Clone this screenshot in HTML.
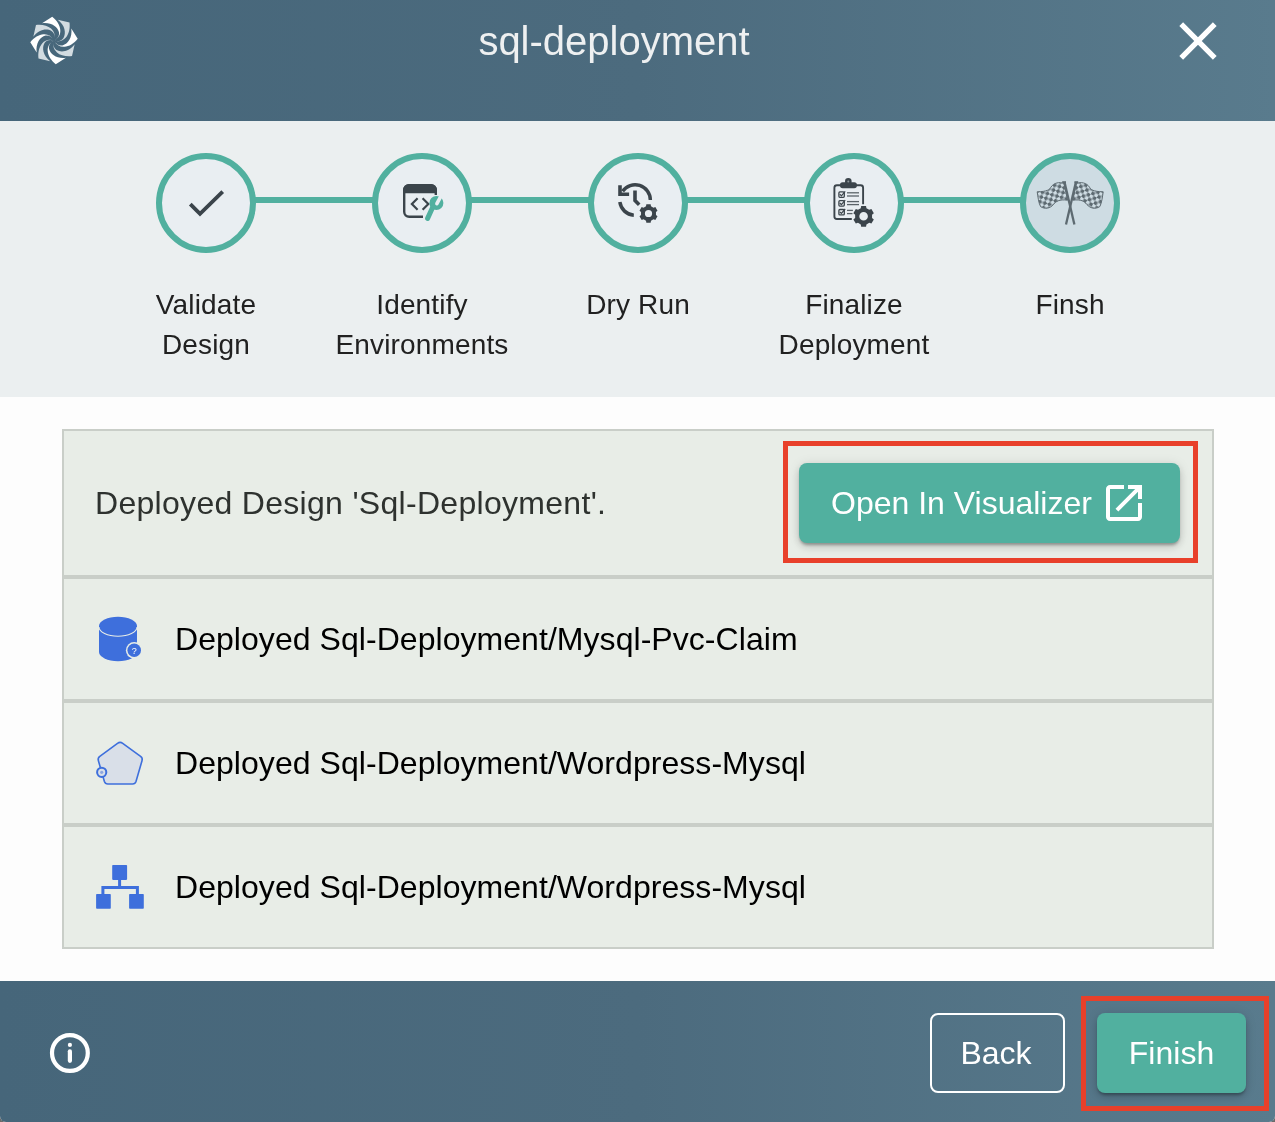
<!DOCTYPE html>
<html><head><meta charset="utf-8">
<style>
*{margin:0;padding:0;box-sizing:border-box}
html,body{width:1275px;height:1122px;overflow:hidden;background:#6b6b6b;font-family:"Liberation Sans",sans-serif}
.dlg{position:absolute;left:0;top:0;width:1275px;height:1122px;border-radius:0 0 6px 6px;overflow:hidden;background:#fdfdfd}
.hdr{position:absolute;left:0;top:0;width:1275px;height:121px;background:linear-gradient(90deg,#46667a 0%,#4c6b7e 50%,#597b8d 100%)}
.title{position:absolute;left:414px;width:400px;top:21px;height:40px;line-height:40px;font-size:40px;color:#eef0f1;text-align:center;white-space:nowrap}
.stepper{position:absolute;left:0;top:121px;width:1275px;height:276px;background:#ebeff0}
.line{position:absolute;top:76px;height:6px;background:#51b09f}
.circ{position:absolute;top:32px;width:100px;height:100px;border-radius:50%;border:6px solid #51b09f;background:#e9eef2}
.circ svg{position:absolute;left:0;top:0}
.lbl{position:absolute;top:164px;width:220px;text-align:center;font-size:28px;line-height:40px;color:#212121;letter-spacing:0.15px}
.card{position:absolute;left:62px;top:429px;width:1152px;height:520px;border:2px solid #c9cec8;background:#c9cec8}
.row{position:absolute;left:0;width:1148px;background:#e8ede7}
.rtxt{position:absolute;left:111px;font-size:32px;line-height:40px;color:#000;letter-spacing:0.05px;white-space:nowrap}
.btn{position:absolute;border-radius:8px;background:#51b09f;color:#fff;font-size:32px;line-height:40px;text-align:center;box-shadow:0 3px 3px -1px rgba(0,0,0,.28),0 4px 8px 0 rgba(0,0,0,.14),0 1px 12px 0 rgba(0,0,0,.1)}
.red{position:absolute;border:5px solid #e8402a}
.ftr{position:absolute;left:0;top:981px;width:1275px;height:141px;background:linear-gradient(90deg,#46667a 0%,#4c6b7e 50%,#597b8d 100%)}
.title,.lbl,.rtxt,.btn,.ftr>div{will-change:transform}
</style></head>
<body>
<div class="dlg">
  <div class="hdr">
    <svg style="position:absolute;left:29px;top:16px" width="50" height="50" viewBox="-25 -24.5 50 50">
      <defs><path id="bl" d="M-1.77,-23.7 L-11.95,-17.3 C-3,-18.5 3.5,-14 4.9,-8.5 C5.6,-5.5 4.2,-2.2 0.3,-0.2 C4.6,-2.5 6.6,-6 6.3,-10.5 C6,-15 3,-20 -1.77,-23.7Z"/></defs>
      <g fill="#ffffff"><use href="#bl"/><use href="#bl" transform="rotate(90)"/><use href="#bl" transform="rotate(180)"/><use href="#bl" transform="rotate(270)"/></g>
      <g fill="#d3dce1"><use href="#bl" transform="rotate(45)"/><use href="#bl" transform="rotate(135)"/><use href="#bl" transform="rotate(225)"/><use href="#bl" transform="rotate(315)"/></g>
    </svg>
    <div class="title">sql-deployment</div>
    <svg style="position:absolute;left:1166px;top:9px" width="64" height="64" viewBox="0 0 24 24"><path fill="#ffffff" d="M19 6.41L17.59 5 12 10.59 6.41 5 5 6.41 10.59 12 5 17.59 6.41 19 12 13.41 17.59 19 19 17.59 13.41 12z"/></svg>
  </div>

  <div class="stepper">
    <div class="line" style="left:250px;width:128px"></div>
    <div class="line" style="left:466px;width:128px"></div>
    <div class="line" style="left:682px;width:128px"></div>
    <div class="line" style="left:898px;width:128px"></div>

    <div class="circ" style="left:156px"></div>
    <div class="circ" style="left:372px"></div>
    <div class="circ" style="left:588px"></div>
    <div class="circ" style="left:804px"></div>
    <div class="circ" style="left:1020px;background:#cedce3"></div>

    <div class="lbl" style="left:96px">Validate<br>Design</div>
    <div class="lbl" style="left:312px">Identify<br>Environments</div>
    <div class="lbl" style="left:528px">Dry Run</div>
    <div class="lbl" style="left:744px">Finalize<br>Deployment</div>
    <div class="lbl" style="left:960px">Finsh</div>
  </div>


  <svg style="position:absolute;left:0;top:0" width="1275" height="400" viewBox="0 0 1275 400">
    <defs>
      <pattern id="chk" width="7" height="7" patternUnits="userSpaceOnUse" patternTransform="rotate(-30)">
        <rect x="0" y="0" width="3.5" height="3.5" fill="#5d6a71"/><rect x="3.5" y="3.5" width="3.5" height="3.5" fill="#5d6a71"/>
      </pattern>
      <path id="flagL" d="M1063.9,183.4 C1059.5,181.8 1053.8,182.6 1050.9,187.2 C1049.5,189.6 1047.5,191.6 1037.2,191.8 C1038,197 1038.6,203 1040.6,206.6 C1045,209.5 1050,208.5 1053.5,204.5 C1056,201.5 1059,199 1067.6,200.2 Z"/>
    </defs>
    <!-- check -->
    <polyline points="190.3,204.1 200,213.9 222.7,191.6" fill="none" stroke="#3b444b" stroke-width="3.8"/>
    <!-- identify environments -->
    <g fill="none" stroke="#3b444b" stroke-width="2.4">
      <path d="M423,216.8 H409.2 A5,5 0 0 1 404.2,211.8 V190.2 A5,5 0 0 1 409.2,185.2 H430.8 A5,5 0 0 1 435.8,190.2 V195"/>
      <polyline points="417.6,198.3 411.9,204 417.6,209.7" stroke-width="2.2"/>
      <polyline points="422.6,198.3 428.3,204 422.6,209.7" stroke-width="2.2"/>
    </g>
    <path d="M403,193.2 V190 A6,6 0 0 1 409,184 H431 A6,6 0 0 1 437,190 V193.2 Z" fill="#3b444b"/>
    <g>
      <line x1="433.5" y1="205.5" x2="427.6" y2="218.4" stroke="#51b09f" stroke-width="5" stroke-linecap="round"/>
      <circle cx="436.4" cy="203" r="7" fill="#51b09f"/>
      <line x1="436.9" y1="203.6" x2="441.5" y2="195.2" stroke="#e9eef2" stroke-width="3.6" stroke-linecap="round"/>
    </g>
    <!-- dry run -->
    <g fill="none" stroke="#3b444b" stroke-width="3.5">
      <path d="M622.6,191.25 A15.25,15.25 0 0 1 650.35,200"/>
      <path d="M633.8,215.2 A15.25,15.25 0 0 1 619.85,202.1"/>
      <polyline points="635,190.4 635,200.6 639.2,204.8" stroke-width="3.6"/>
    </g>
    <path d="M618.2,185.3 H621.8 V192.5 H629.1 V196 H618.2 Z" fill="#3b444b"/>
    <path d="M646.00,206.32 L646.35,204.35 L650.65,204.35 L651.00,206.32 L653.47,207.75 L655.35,207.07 L657.50,210.78 L655.97,212.08 L655.97,214.92 L657.50,216.22 L655.35,219.93 L653.47,219.25 L651.00,220.68 L650.65,222.65 L646.35,222.65 L646.00,220.68 L643.53,219.25 L641.65,219.93 L639.50,216.22 L641.03,214.92 L641.03,212.08 L639.50,210.78 L641.65,207.07 L643.53,207.75Z M652.10,213.50 A3.6,3.6 0 1 0 644.90,213.50 A3.6,3.6 0 1 0 652.10,213.50Z" fill="#3b444b" fill-rule="evenodd"/>
    <!-- finalize -->
    <g fill="none" stroke="#3b444b">
      <path d="M851.8,219 H836.9 A2.5,2.5 0 0 1 834.4,216.5 V187.7 A2.5,2.5 0 0 1 836.9,185.2 H860.6 A2.5,2.5 0 0 1 863.1,187.7 V204.2" stroke-width="1.9"/>
      <rect x="838.9" y="191.9" width="5.4" height="5.4" rx="1" stroke-width="1.3"/>
      <rect x="838.9" y="200.7" width="5.4" height="5.4" rx="1" stroke-width="1.3"/>
      <rect x="838.9" y="209.5" width="5.4" height="5.4" rx="1" stroke-width="1.3"/>
      <polyline points="839.8,194.2 841.4,195.8 845.2,191.4" stroke-width="1.2"/>
      <polyline points="839.8,203 841.4,204.6 845.2,200.2" stroke-width="1.2"/>
      <polyline points="839.8,211.8 841.4,213.4 845.2,209" stroke-width="1.2"/>
      <g stroke-width="1.3" stroke="#5a6268">
        <line x1="847" y1="192.8" x2="859" y2="192.8"/><line x1="847" y1="196" x2="859" y2="196"/>
        <line x1="847" y1="201.6" x2="859" y2="201.6"/><line x1="847" y1="204.6" x2="859" y2="204.6"/>
        <line x1="847" y1="210.4" x2="852.9" y2="210.4"/><line x1="847" y1="213.6" x2="852.5" y2="213.6"/>
      </g>
    </g>
    <rect x="840" y="182.2" width="16.9" height="6" rx="2.6" fill="#3b444b"/>
    <circle cx="848.3" cy="181.4" r="3.3" fill="#3b444b"/>
    <circle cx="848.3" cy="181.4" r="1" fill="#8d969b"/>
    <path d="M860.77,208.18 L861.16,205.88 L866.04,205.88 L866.43,208.18 L869.22,209.79 L871.40,208.98 L873.84,213.21 L872.05,214.69 L872.05,217.91 L873.84,219.39 L871.40,223.62 L869.22,222.81 L866.43,224.42 L866.04,226.72 L861.16,226.72 L860.77,224.42 L857.98,222.81 L855.80,223.62 L853.36,219.39 L855.15,217.91 L855.15,214.69 L853.36,213.21 L855.80,208.98 L857.98,209.79Z M867.90,216.30 A4.3,4.3 0 1 0 859.30,216.30 A4.3,4.3 0 1 0 867.90,216.30Z" fill="#3b444b" fill-rule="evenodd"/>
    <!-- flags -->
    <g id="flagGrp">
      <use href="#flagL" fill="url(#chk)" stroke="#5d6a71" stroke-width="1"/>
      <line x1="1064.6" y1="182.5" x2="1074.4" y2="224.4" stroke="#5d6a71" stroke-width="2.3"/>
      <rect x="1062.2" y="181.2" width="3.8" height="2" fill="#5d6a71"/>
    </g>
    <use href="#flagGrp" transform="translate(2140.4,0) scale(-1,1)"/>
  </svg>
  <div class="card">
    <div class="row" style="top:0;height:144px">
      <div class="rtxt" style="left:31px;top:52px;color:#2e322f;letter-spacing:0.3px">Deployed Design 'Sql-Deployment'.</div>
    </div>
    <div class="row" style="top:148px;height:120px">
      <div class="rtxt" style="top:40px">Deployed Sql-Deployment/Mysql-Pvc-Claim</div>
    </div>
    <div class="row" style="top:272px;height:120px">
      <div class="rtxt" style="top:40px">Deployed Sql-Deployment/Wordpress-Mysql</div>
    </div>
    <div class="row" style="top:396px;height:120px">
      <div class="rtxt" style="top:40px">Deployed Sql-Deployment/Wordpress-Mysql</div>
    </div>
  </div>

  <div class="btn" style="left:799px;top:463px;width:381px;height:80px;line-height:80px;text-align:left;padding-left:32px">Open In Visualizer</div>
  <div class="red" style="left:783px;top:441px;width:415px;height:122px"></div>


  <svg style="position:absolute;left:0;top:400px" width="1275" height="581" viewBox="0 400 1275 581">
    <!-- external link icon -->
    <g transform="translate(1100,479) scale(2)"><path fill="#ffffff" d="M19 19H5V5h7V3H5c-1.11 0-2 .9-2 2v14c0 1.1.89 2 2 2h14c1.1 0 2-.9 2-2v-7h-2v7zM14 3v2h3.59l-9.83 9.83 1.41 1.41L19 6.41V10h2V3h-7z"/></g>
    <!-- db -->
    <g fill="#3e6fdc">
      <path d="M99,626 V652 A19,9.3 0 0 0 137,652 V626 Z"/>
      <ellipse cx="118" cy="626" rx="19" ry="9.3"/>
    </g>
    <path d="M99,627 A19,9.3 0 0 0 137,627" fill="none" stroke="#e8ede7" stroke-width="1.1"/>
    <circle cx="134.2" cy="650.3" r="8.3" fill="#e8ede7"/>
    <circle cx="134.2" cy="650.3" r="6.8" fill="#3e6fdc"/>
    <text x="134.2" y="653.6" font-family="Liberation Sans" font-size="9" fill="#ffffff" text-anchor="middle">?</text>
    <!-- pentagon -->
    <path d="M117.5,743.3 Q120.1,741.4 122.7,743.3 L140.6,756.3 Q142.9,758 142,760.8 L136,781.5 Q135.2,784 132.6,784 H107.8 Q105.2,784 104.4,781.5 L98.4,760.8 Q97.5,758 99.8,756.3 Z" fill="#d9dfe8" stroke="#3e6fdc" stroke-width="1.6"/>
    <circle cx="101.7" cy="772.3" r="4.6" fill="#d9dfe8" stroke="#3e6fdc" stroke-width="2"/>
    <circle cx="101.7" cy="772.3" r="1.6" fill="#8ea6e0"/>
    <!-- hierarchy -->
    <g fill="#3e6fdc">
      <rect x="112.2" y="865" width="14.9" height="14.9" rx="0.8"/>
      <rect x="96.1" y="893.9" width="14.7" height="14.8" rx="0.8"/>
      <rect x="129.1" y="893.9" width="14.7" height="14.8" rx="0.8"/>
    </g>
    <path d="M119.6,879 V887.6 M102.9,895 V887.6 H137.4 V895" fill="none" stroke="#3e6fdc" stroke-width="3"/>
  </svg>
  <div class="ftr">
    <svg style="position:absolute;left:45px;top:48px" width="50" height="50" viewBox="45 1029 50 50">
      <circle cx="69.9" cy="1053" r="17.9" fill="none" stroke="#ffffff" stroke-width="4.2"/>
      <circle cx="69.9" cy="1044.9" r="2.1" fill="#ffffff"/>
      <line x1="69.9" y1="1051.3" x2="69.9" y2="1060.8" stroke="#ffffff" stroke-width="4.2" stroke-linecap="round"/>
    </svg>
    <div style="position:absolute;left:930px;top:32px;width:135px;height:80px;border:2px solid #fff;border-radius:8px;color:#fff;font-size:32px;line-height:76px;text-align:center;text-indent:-3px">Back</div>
  </div>
  <div class="btn" style="left:1097px;top:1013px;width:149px;height:80px;line-height:80px">Finish</div>
  <div class="red" style="left:1081px;top:996px;width:188px;height:115px"></div>
</div>
</body></html>
